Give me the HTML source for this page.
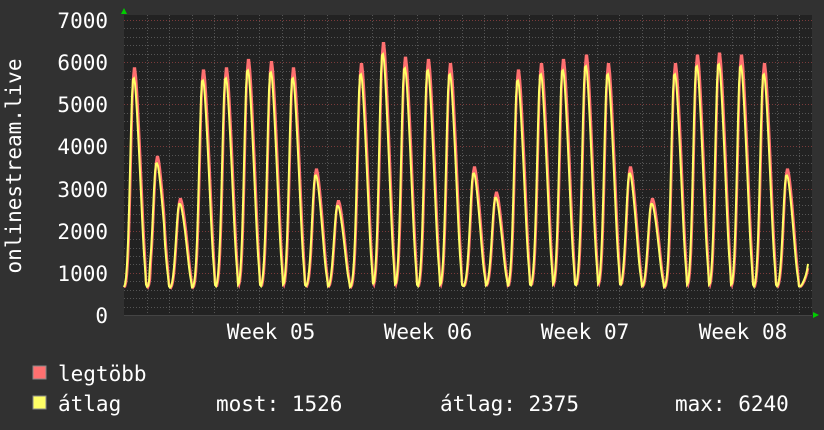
<!DOCTYPE html>
<html><head><meta charset="utf-8"><style>
html,body{margin:0;padding:0;background:#313131;}
body{width:824px;height:430px;overflow:hidden;position:relative;font-family:"DejaVu Sans Mono","Liberation Mono",monospace;color:#fff;}
svg{position:absolute;left:0;top:0}
</style></head><body>
<svg id="g" width="824" height="430" xmlns="http://www.w3.org/2000/svg" font-family="DejaVu Sans Mono, Liberation Mono, monospace" fill="#fff">
<rect x="124" y="15" width="688" height="300" fill="#222"/>
<g id="grid"></g>
<g id="data"></g>
<polygon points="121,14 127,14 124,8" fill="#0c0"/>
<polygon points="813,312 813,318 819,315" fill="#0c0"/>
<g font-size="21" text-anchor="end">
<text x="108" y="28">7000</text><text x="108" y="70">6000</text><text x="108" y="112">5000</text>
<text x="108" y="154">4000</text><text x="108" y="197">3000</text><text x="108" y="239">2000</text>
<text x="108" y="281">1000</text><text x="108" y="323">0</text>
</g>
<text transform="translate(21,166) rotate(-90)" font-size="21" text-anchor="middle">onlinestream.live</text>
<g font-size="21" text-anchor="middle">
<text x="271" y="339">Week 05</text><text x="428" y="339">Week 06</text>
<text x="585" y="339">Week 07</text><text x="743" y="339">Week 08</text>
</g>
<rect x="33" y="366" width="13" height="13" fill="#ff7070" stroke="#888" stroke-width="1"/>
<rect x="33" y="396" width="13" height="13" fill="#ffff66" stroke="#888" stroke-width="1"/>
<g font-size="21">
<text x="58" y="381">legtöbb</text>
<text x="58" y="411">átlag</text>
<text x="216" y="411">most: 1526</text>
<text x="440" y="411">átlag: 2375</text>
<text x="675" y="411">max: 6240</text>
</g>
</svg>
<script>
var NS="http://www.w3.org/2000/svg",grid=document.getElementById('grid'),data=document.getElementById('data');
function Y(v){return 315-v*0.04214;}
function line(x1,y1,x2,y2,c){var l=document.createElementNS(NS,'line');l.setAttribute('x1',x1);l.setAttribute('y1',y1);l.setAttribute('x2',x2);l.setAttribute('y2',y2);l.setAttribute('stroke',c);l.setAttribute('stroke-width',1);l.setAttribute('stroke-dasharray','1,2');grid.appendChild(l);}
for(var v=200;v<=7000;v+=200){var y=Math.round(Y(v))+0.5;line(124,y,812,y,v%1000==0?'#7a3a3a':'#555');}
for(var x=124+22.5;x<812;x+=22.5){var xx=Math.round(x)+0.5;line(xx,15,xx,315,'#555');}
var peaks=[[134,5850],[157,3750],[180,2750],[203,5800],[226,5850],[248,6050],[271,6000],[293,5850],[316,3450],[338,2700],[361,5950],[383,6450],[405,6100],[428,6050],[450,5950],[474,3500],[496,2900],[518,5800],[541,5950],[563,6050],[586,6150],[608,5950],[630,3500],[652,2750],[675,5950],[697,6150],[719,6200],[741,6150],[764,5950],[787,3450],[815,3300]];
function val(x,k){var tr=800+180*Math.sin(x*0.28+1)+(x>150&&x<165?250:0),s=0;for(var i=0;i<peaks.length;i++){var d=x-peaks[i][0];var w=d<0?3:4.5;var p=peaks[i][1]*k-tr;
var g=Math.exp(-(d*d)/(2*w*w));var sh=(d>0&&d<12)?0.2*Math.exp(-((d-7)*(d-7))/18):0;s=Math.max(s,p*Math.min(1,g+sh));}
return tr+s;}
function path(k,c,wd,off){var d='';for(var x=124;x<=808;x+=1){var v=val(x-off,k);d+=(x==124?'M':'L')+x+','+Y(v).toFixed(1);}
var p=document.createElementNS(NS,'path');p.setAttribute('d',d);p.setAttribute('fill','none');p.setAttribute('stroke',c);p.setAttribute('stroke-width',wd);data.appendChild(p);}
path(1,'#ff7070',2.5,0);path(0.96,'#ffff66',2,-0.7);
var ax=document.createElementNS(NS,'line');ax.setAttribute('x1',124);ax.setAttribute('y1',315.5);ax.setAttribute('x2',812);ax.setAttribute('y2',315.5);ax.setAttribute('stroke','#444');data.appendChild(ax);
</script>
</body></html>
